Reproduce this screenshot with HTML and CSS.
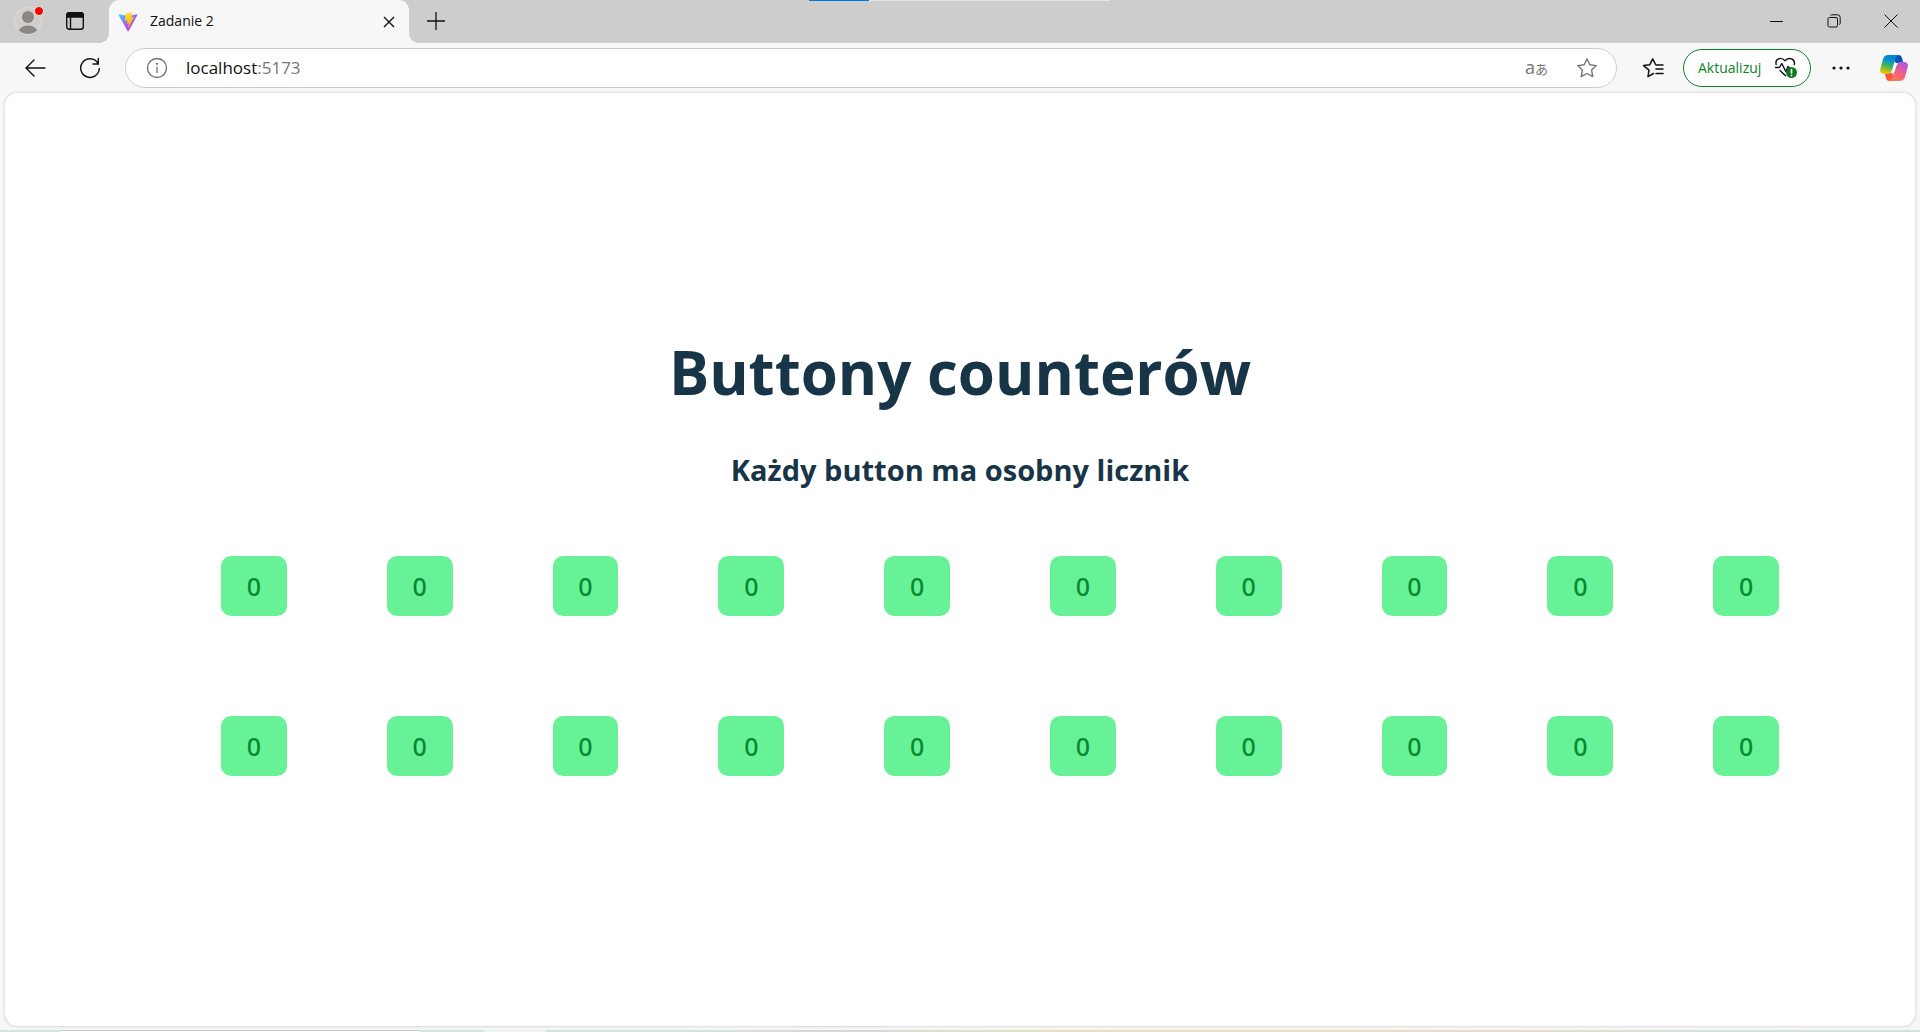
FILE: index.html
```html
<!DOCTYPE html>
<html lang="pl">
<head>
<meta charset="utf-8">
<meta name="viewport" content="width=device-width, initial-scale=1">
<title>Zadanie 2</title>
<link rel="stylesheet" href="styles.css">
</head>
<body>
<header class="titlebar">
  <div class="load-hint"></div>
  <button class="icon-btn profile" aria-label="Profil">
    <svg width="32" height="32" viewBox="0 0 32 32"><defs><clipPath id="face"><circle cx="16" cy="16" r="13"/></clipPath></defs><circle cx="16" cy="16" r="13.500" fill="#d2cecb" stroke="#dedbd9"/><g clip-path="url(#face)" fill="#8b8785"><circle cx="16" cy="12" r="6"/><ellipse cx="16" cy="28" rx="10" ry="7.500"/></g><circle cx="27" cy="6" r="4.500" fill="#f00" stroke="#e4e4e4"/></svg>
  </button>
  <button class="icon-btn workspaces" aria-label="Menu kart">
    <svg width="20" height="20" viewBox="0 0 20 20" fill="none" stroke="#111" stroke-width="1.400"><rect x="1.700" y="1.700" width="16.600" height="16.600" rx="2.500"/><path d="M5.500 6v12"/><path d="M1.700 6V4a2.300 2.300 0 0 1 2.300-2.300h12A2.300 2.300 0 0 1 18.300 4v2z" fill="#111"/></svg>
  </button>
  <div class="tab">
    <svg width="20" height="20" viewBox="0 0 410 404"><defs><linearGradient id="va" x1="6" y1="33" x2="235" y2="344" gradientUnits="userSpaceOnUse"><stop stop-color="#41d1ff"/><stop offset="1" stop-color="#bd34fe"/></linearGradient><linearGradient id="vb" x1="194" y1="9" x2="236" y2="292" gradientUnits="userSpaceOnUse"><stop stop-color="#ffea83"/><stop offset=".08" stop-color="#ffdd35"/><stop offset="1" stop-color="#ffa800"/></linearGradient></defs><path fill="url(#va)" d="M399.600 59.500 215.600 388.500c-3.800 6.800-13.600 6.800-17.400 0L10.600 59.600c-4.200-7.400 2.100-16.300 10.500-14.800l184.200 32.900c1.200.2 2.400.2 3.500 0l180.300-32.900c8.400-1.500 14.700 7.300 10.500 14.700z"/><path fill="url(#vb)" d="M293 1.600 156.800 28.300c-2.300.4-3.900 2.300-4.100 4.600l-8.300 141.500c-.2 3.300 2.900 5.900 6.100 5.200l37.900-8.800c3.500-.8 6.800 2.300 6 5.900l-11.200 55.200c-.8 3.700 2.700 6.900 6.300 5.800l23.400-7.100c3.600-1.100 7.100 2.100 6.300 5.800l-17.900 86.600c-1.100 5.400 6.100 8.400 9.100 3.700l2-3 111-221.400c1.900-3.700-1.300-7.900-5.400-7.200l-39 7.500c-3.700.7-6.800-2.700-5.800-6.300L298.700 8c1-3.600-2.100-7.100-5.700-6.400z"/></svg>
    <span class="tab-title">Zadanie 2</span>
    <button class="icon-btn tab-close" aria-label="Zamknij kartę"><svg width="12" height="12" viewBox="0 0 12 12" stroke="#111" stroke-width="1.400"><path d="M1 1l10 10M11 1 1 11"/></svg></button>
  </div>
  <button class="icon-btn new-tab" aria-label="Nowa karta"><svg width="18" height="18" viewBox="0 0 18 18" stroke="#111" stroke-width="1.300"><path d="M9 0v18M0 9h18"/></svg></button>
  <div class="window-controls">
    <button class="icon-btn" aria-label="Minimalizuj"><svg width="14" height="14" viewBox="0 0 14 14" stroke="#111"><path d="M0 7.500h13"/></svg></button>
    <button class="icon-btn" aria-label="Przywróć"><svg width="14" height="14" viewBox="0 0 14 14" fill="none" stroke="#111"><rect x="1" y="3.500" width="9.500" height="9.500" rx="1.500"/><path d="M3.500 1.500C4 .8 4.600.8 5 .8h5.500a2.700 2.700 0 0 1 2.700 2.700V9c0 .8-.3 1.200-.8 1.700"/></svg></button>
    <button class="icon-btn" aria-label="Zamknij"><svg width="14" height="14" viewBox="0 0 14 14" stroke="#111"><path d="M.5.500l13 13M13.500.500l-13 13"/></svg></button>
  </div>
</header>
<nav class="toolbar">
  <button class="icon-btn back" aria-label="Wstecz"><svg width="22" height="20" viewBox="0 0 22 20" fill="none" stroke="#111" stroke-width="1.400" stroke-linecap="round"><path d="M10 2 2 10l8 8M2 10h19"/></svg></button>
  <button class="icon-btn reload" aria-label="Odśwież"><svg width="22" height="22" viewBox="0 0 22 22" fill="none" stroke="#111" stroke-width="1.400" stroke-linecap="round"><path d="M20.300 11.500A9.300 9.300 0 1 1 18.800 6M19.300 1.500V7H14"/></svg></button>
  <div class="address">
    <button class="icon-btn" aria-label="Informacje o witrynie"><svg width="22" height="22" viewBox="0 0 22 22" fill="none" stroke="#707070" stroke-width="1.300"><circle cx="11" cy="11" r="9.500"/><path d="M11 9.500V16"/><circle cx="11" cy="6.800" r=".5"/></svg></button>
    <a class="url" href="http://localhost:5173">localhost<span class="port">:5173</span></a>
    <button class="icon-btn translate" aria-label="Tłumacz"><span class="latin">a</span><span class="kana">あ</span></button>
    <button class="icon-btn favorite" aria-label="Dodaj do ulubionych"><svg width="22" height="22" viewBox="0 0 22 22" fill="none" stroke="#757575" stroke-width="1.400" stroke-linejoin="round"><path d="m11 1.800 2.800 5.900 6.500.9-4.700 4.500 1.200 6.500-5.800-3.100-5.800 3.100 1.200-6.500L1.700 8.600l6.500-.9z"/></svg></button>
  </div>
  <button class="icon-btn favorites-list" aria-label="Ulubione"><svg width="22" height="22" viewBox="0 0 22 22" fill="none" stroke="#111" stroke-width="1.500" stroke-linejoin="round" stroke-linecap="round"><path d="M11.500 16.500 6 19.600l1-6.500L1.500 8.600l6.300-.9 2.900-5.900 2.900 5.700M14 8h7M14 12h7M14 16.500h7"/></svg></button>
  <button class="update">Aktualizuj
    <svg width="24" height="22" viewBox="0 0 24 22" fill="none" stroke="#111" stroke-width="1.400" stroke-linejoin="round" stroke-linecap="round"><path d="M2.200 7.500C.7 2 7-.8 11 3.800c4-4.600 10.500-1.600 9.300 3.700M1.500 10.500h3.800L7.800 6.500l4 8L14 9.500l1.500 1.500M6 13.500l5.500 5.300"/><circle cx="17.500" cy="15.500" r="5.500" fill="#0b7a23" stroke="none"/><path d="M17.500 12.500v3.300M17.500 18.300v.1" stroke="#fff" stroke-width="1.700"/></svg>
  </button>
  <button class="icon-btn more" aria-label="Więcej"><svg width="18" height="4" viewBox="0 0 18 4" fill="#111"><circle cx="2" cy="2" r="1.600"/><circle cx="9" cy="2" r="1.600"/><circle cx="16" cy="2" r="1.600"/></svg></button>
  <button class="icon-btn copilot" aria-label="Copilot"><svg width="28" height="28" viewBox="0 0 28 28"><defs><linearGradient id="ca" x1=".7" y1="0" x2=".4" y2="1"><stop stop-color="#087be0"/><stop offset=".35" stop-color="#0b96c8"/><stop offset=".65" stop-color="#52b845"/><stop offset="1" stop-color="#edc510"/></linearGradient><linearGradient id="cb" x1=".8" y1="0" x2=".3" y2="1"><stop stop-color="#a65ae8"/><stop offset=".5" stop-color="#f05b91"/><stop offset="1" stop-color="#ff7955"/></linearGradient></defs><path fill="#0754b8" d="M14 1h4.500c2 0 3 1 3.500 3l1.500 5.500H19c-3 0-4-1-4.500-3z"/><path fill="#fb5834" d="M14 27H9.500c-2 0-3-1-3.500-3l-1.500-5.500H9c3 0 4 1 4.500 3z"/><path fill="url(#ca)" d="M8.500 1H19c-2 0-3 1.500-3.500 3.500l-3 10.500C11.500 18.500 10 20 7.500 20H4c-3 0-4.500-2-3.700-5L3 5c.8-2.600 2.500-4 5.500-4z"/><path fill="url(#cb)" d="M19.500 27H9c2 0 3-1.500 3.500-3.500l3-10.500C16.500 9.500 18 8 20.500 8H24c3 0 4.500 2 3.700 5L25 23c-.8 2.600-2.500 4-5.500 4z"/><path fill="#f7f7f7" d="M14.800 9.500h3.700c-1.300.8-2 2-2.500 3.700l-1 3.300c-.6 1.700-1.500 2.500-3 2.500H10c1.300-.8 2-2 2.500-3.700l1-3.300c.3-1.200.7-1.900 1.300-2.500z"/></svg></button>
</nav>
<main class="page">
  <h1>Buttony counterów</h1>
  <h2>Każdy button ma osobny licznik</h2>
  <div class="counters">
    <button>0</button><button>0</button><button>0</button><button>0</button><button>0</button>
    <button>0</button><button>0</button><button>0</button><button>0</button><button>0</button>
    <button>0</button><button>0</button><button>0</button><button>0</button><button>0</button>
    <button>0</button><button>0</button><button>0</button><button>0</button><button>0</button>
  </div>
</main>
<footer class="taskbar"><span class="search"></span><span class="active-app"></span></footer>
</body>
</html>
```
FILE: styles.css
```css
* { box-sizing: border-box; }

body {
  margin: 0;
  min-height: 100vh;
  display: flex;
  flex-direction: column;
  background: #f7f7f7;
  font-family: "Open Sans", "Noto Sans", "Noto Sans CJK JP", sans-serif;
  color: #111;
}

button { font-family: inherit; cursor: pointer; }

svg { display: block; flex: none; }

.icon-btn {
  display: flex;
  align-items: center;
  justify-content: center;
  padding: 0;
  border: 0;
  background: none;
}

/* Window title bar */
.titlebar {
  position: relative;
  display: flex;
  align-items: center;
  height: 43px;
  padding-bottom: 1px;
  background: #cdcdcd;
}

.load-hint {
  position: absolute;
  top: 0;
  left: 809px;
  width: 301px;
  height: 1px;
  background: linear-gradient(to right, #0078d7 60px, #e5e5e5 60px);
}

.profile { width: 32px; margin-left: 12px; }
.workspaces { width: 20px; margin-left: 21px; }

.tab {
  position: relative;
  align-self: flex-start;
  display: flex;
  align-items: center;
  width: 300px;
  height: 43px;
  margin-left: 24px;
  padding: 0 14px 0 9px;
  border-radius: 10px 10px 0 0;
  background: #f7f7f7;
}

.tab::before,
.tab::after {
  content: "";
  position: absolute;
  bottom: 0;
  width: 10px;
  height: 10px;
}
.tab::before { right: 100%; background: radial-gradient(circle at 0 0, #cdcdcd 10px, #f7f7f7 10px); }
.tab::after { left: 100%; background: radial-gradient(circle at 100% 0, #cdcdcd 10px, #f7f7f7 10px); }

.tab-title { flex: 1; margin-left: 12px; padding-bottom: 2px; font-size: 14px; line-height: 20px; }
.tab-close { width: 12px; height: 12px; }
.new-tab { width: 18px; margin-left: 18px; }

.window-controls { display: flex; margin: 0 1px 0 auto; }
.window-controls .icon-btn { width: 57px; height: 42px; }

/* Navigation toolbar */
.toolbar {
  display: flex;
  align-items: center;
  height: 50px;
}

.back { margin-left: 24px; }
.reload { margin-left: 33px; }

.address {
  flex: 1;
  display: flex;
  align-items: center;
  height: 40px;
  margin-left: 24px;
  padding: 0 18px 0 20px;
  border: 1px solid #cdcdcd;
  border-radius: 20px;
  background: #fff;
}

.url {
  flex: 1;
  margin-left: 18px;
  padding-bottom: 1px;
  font-size: 17px;
  line-height: 24px;
  color: #111;
  text-decoration: none;
}
.port { color: #767676; }
.translate { align-items: baseline; color: #757575; line-height: 24px; }
.latin { font-size: 18px; }
.kana { font-size: 13px; }
.favorite { margin-left: 28px; }
.favorites-list { margin-left: 25px; }

.update {
  display: flex;
  align-items: center;
  justify-content: space-between;
  width: 128px;
  height: 38px;
  margin-left: 19px;
  padding: 0 12px 1px 14px;
  border: 1px solid #0b8427;
  border-radius: 19px;
  background: #fff;
  color: #0b8427;
  font-size: 14px;
}

.more { margin-left: 21px; }
.copilot { margin: 0 12px 0 30px; }

/* Page content */
.page {
  flex: 1;
  display: flex;
  flex-direction: column;
  justify-content: center;
  margin: 0 5px 4px;
  padding: 0 136px 12px;
  border-radius: 12px;
  background: #fff;
  box-shadow: 0 0 3px #bbb;
  color: #183548;
  text-align: center;
}

h1 { margin: 0 0 36px; font-size: 60px; line-height: 80px; }
h2 { margin: 0 0 64px; font-size: 29px; line-height: 44px; }

.counters {
  display: grid;
  grid-template-columns: repeat(10, 1fr);
  gap: 100px;
  padding-left: 80px;
}

.counters button {
  height: 60px;
  padding: 0;
  border: 0;
  border-radius: 10px;
  background: #67f298;
  color: #078a31;
  font-family: "Noto Sans", "Open Sans", sans-serif;
  font-size: 25px;
  font-weight: 500;
}

/* Top edge of the system taskbar */
.taskbar {
  display: flex;
  height: 2px;
  padding-left: 60px;
  background: linear-gradient(to right, #d3e4da 36%, #dcd8d4 42%, #d8dad5 46%, #e2e0c8 52%, #e8dfc5 68%, #e8dace 78%, #d8dfd4 84%, #d0e2df);
}
.search { width: 360px; border-top: 1px solid #c8c8c8; background: #fff; }
.active-app { width: 61px; margin-left: 64px; background: #ecf3f0; }
```
